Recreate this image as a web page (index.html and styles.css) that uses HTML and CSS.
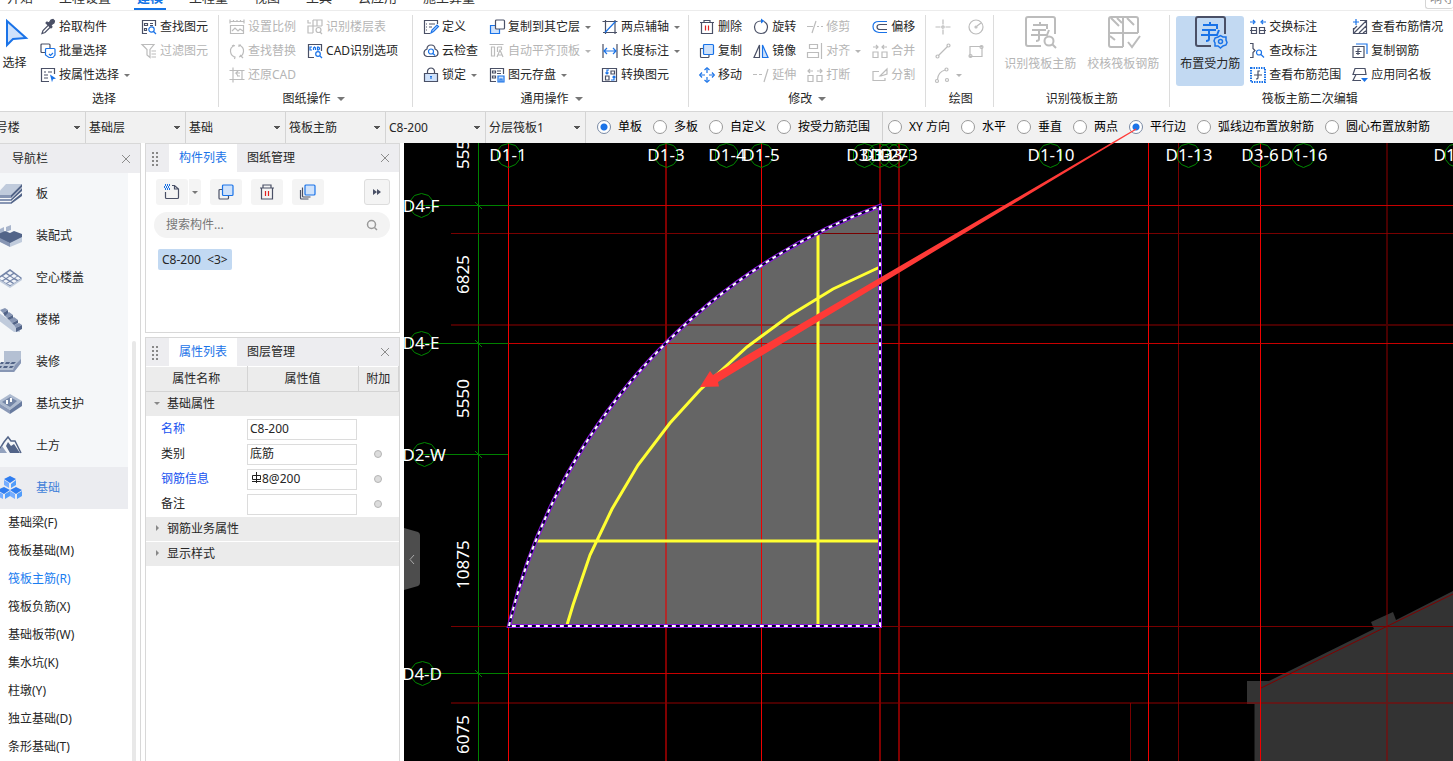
FILE: index.html
```html
<!DOCTYPE html>
<html lang="zh-CN">
<head>
<meta charset="utf-8">
<title>建模 - 筏板主筋</title>
<link rel="stylesheet" href="styles.css">
</head>
<body>
<header class="menubar">
  <nav class="menu">
    <a href="#">开始</a><a href="#">工程设置</a><a href="#" class="current">建模</a><a href="#">工程量</a><a href="#">视图</a><a href="#">工具</a><a href="#">云应用</a><a href="#">施工算量</a>
  </nav>
  <div class="menu-search">响导</div>
</header>

<section class="ribbon">
  <div class="group">
    <div class="tools">
      <button class="pick"><svg class="i" width="24" height="30" viewBox="0 0 24 30"><path class="b l" stroke-width="2" d="M4 3v24l6-6 13-1z"/></svg>选择</button>
      <div class="col">
        <button class="tool"><svg class="i" viewBox="0 0 16 16"><path d="M2 14.500l1-3 6-6 2 2-6 6z"/><path class="d" d="M7 3l2 1 2-3 2-.5 1.500 1.500-.5 2-3 2 1 2-1 1L6 4z"/></svg>拾取构件</button>
        <button class="tool"><svg class="i" viewBox="0 0 16 16"><path d="M5 9.500H2q-1 0-1-1V2q0-1 1-1h7q1 0 1 1v3"/><path class="b" d="M6 5.500h8q1 0 1 1V12l-2 2.500H9L5.500 12V6.500z"/><path class="b" d="M9 11l1.500 1.500L13 10"/></svg>批量选择</button>
        <button class="tool"><svg class="i" viewBox="0 0 16 16"><path d="M9 14.500H1.500V1.500h13V7M4 5h2M8 5h4M4 8h4M4 11h4"/><path class="bf" d="M10 7.500l6 4-3 .7-1 3z"/></svg>按属性选择<i class="caret"></i></button>
      </div>
      <div class="col">
        <button class="tool"><svg class="i" viewBox="0 0 16 16"><path d="M6 14.500H1.500V1.500h13V7M3.500 4.500h3v2h-3zM3.500 9.500h2v2h-2zM9 4.500h3M9 6.500h3"/><circle class="b" cx="10.500" cy="10.500" r="2.700"/><path class="b" d="M12.500 12.500L15 15"/></svg>查找图元</button>
        <button class="tool" disabled><svg class="i" viewBox="0 0 16 16"><path d="M1 1.500h12L9 6.500v8L6 12V6.500zM10.500 8H15M10.500 11H15M10.500 14H15"/></svg>过滤图元</button>
      </div>
    </div>
    <div class="caption">选择</div>
  </div>

  <div class="group sheets">
    <div class="tools">
      <div class="col">
        <button class="tool" disabled><svg class="i" viewBox="0 0 16 16"><path d="M1 2.500h14M1 .5v4M15 .5v4M4.500 1v2M8 1v2M11.500 1v2M1.500 6.500h13v8h-13zM3 12l3-3 3 3 2-2 3 2"/></svg>设置比例</button>
        <button class="tool" disabled><svg class="i" viewBox="0 0 16 16"><path d="M6 2.500Q1 4 1.500 8.500T6 14M4 13.500l2 .5-.5 2M10 2q5 2 4.500 6.500T10 14M10 4V2h2M3 3l2-1"/><path d="M11 12l3 3"/></svg>查找替换</button>
        <button class="tool" disabled><svg class="i" viewBox="0 0 16 16"><path d="M4 .5v15M.5 3.500h15M.5 12.500h15M13 3v10M11 6H7l2-2M7 6l2 3M8 9h3"/></svg>还原CAD</button>
      </div>
      <div class="col">
        <button class="tool" disabled><svg class="i" viewBox="0 0 16 16"><path d="M1 1v3h3M6 1v6H1v7h5M6 1h9v6M10 1v6M6 7h9M6 7v7"/><circle cx="11.500" cy="11" r="2.500"/><path d="M13 13l2 2"/></svg>识别楼层表</button>
        <button class="tool"><svg class="i" viewBox="0 0 16 16"><path d="M7 14.500H1.500v-13h13V8"/><path class="b" d="M5 4H3v3h2M6.500 7V5l1-1 1 1v2M10.500 4v3h1l1-1V5l-1-1z"/><circle class="b" cx="11" cy="11" r="2.300"/><path class="b" d="M13 13l2 2"/></svg>CAD识别选项</button>
      </div>
    </div>
    <div class="caption">图纸操作<i class="caret big"></i></div>
  </div>

  <div class="group common">
    <div class="tools">
      <div class="col">
        <button class="tool"><svg class="i" viewBox="0 0 16 16"><path d="M7 14.500H1.500V1.500h13V5M3 5h1M6 5h6M3 8h1M6 8h3M3 11h1"/><path class="b l" d="M8 14l1-3 5-5 1.500 1.500-5 5z"/></svg>定义</button>
        <button class="tool"><svg class="i" viewBox="0 0 16 16"><path d="M4 13.500Q1 13 1 10t3-4q0-4 4-4t4 4q3 1 3 4t-3 3.500z"/><circle class="b" cx="8" cy="8.500" r="2.500"/><path class="b" d="M10 10.500l2 2"/></svg>云检查</button>
        <button class="tool"><svg class="i" viewBox="0 0 16 16"><path d="M4.500 6V4Q5 1 8 1t3.500 3v2"/><path class="l" d="M1.500 6.500h13v8h-13z"/><path class="b" d="M8 9v3M7 9.500h2"/></svg>锁定<i class="caret"></i></button>
      </div>
      <div class="col">
        <button class="tool"><svg class="i" viewBox="0 0 16 16"><path class="b l" d="M1.500 6.500h9v8h-9z"/><rect class="w" x="6.500" y="1" width="9" height="9" rx="1"/></svg>复制到其它层<i class="caret"></i></button>
        <button class="tool" disabled><svg class="i" viewBox="0 0 16 16"><path d="M.5 1.500h14M2.500 4h3v9h-3zM8.500 4h4v3M8.500 4v5M8 14l3-7 3 7M9 12h4"/></svg>自动平齐顶板<i class="caret"></i></button>
        <button class="tool"><svg class="i" viewBox="0 0 16 16"><path d="M7 14.500H1.500v-13h13V7M3.500 4h3v2h-3zM3.500 9h3v2h-3zM8 4h4M8 6.500h4"/><path class="b l" d="M9 9h6v6H9zM11 15v-3h2v3"/></svg>图元存盘<i class="caret"></i></button>
      </div>
      <div class="col">
        <button class="tool"><svg class="i" viewBox="0 0 16 16"><path d="M3.500 1v14M.5 2.500h15M1 13.500h14M13 1v14"/><path class="b" d="M3 13.500L13.500 2.500"/></svg>两点辅轴<i class="caret"></i></button>
        <button class="tool"><svg class="i" viewBox="0 0 16 16"><path d="M1 1v14M15 1v14"/><path class="b" d="M2 8h12M5 5L2 8l3 3M11 5l3 3-3 3"/></svg>长度标注<i class="caret"></i></button>
        <button class="tool"><svg class="i" viewBox="0 0 16 16"><path d="M.5 1.500h14v13H.5zM9 4h3.500v3H9zM3.500 9H7v4H3.500z"/><path class="b" d="M7 3H5v4M3.500 5.500L5 7l1.500-1.500M9 13h3V9M10.500 10.500L12 9l1.500 1.500"/></svg>转换图元</button>
      </div>
    </div>
    <div class="caption">通用操作<i class="caret big"></i></div>
  </div>

  <div class="group">
    <div class="tools">
      <div class="col">
        <button class="tool"><svg class="i" viewBox="0 0 16 16"><path d="M1 3.500h14M5 3.500v-2h6v2M2.500 3.500v11h11v-11"/><path class="r" d="M6.500 6.500v5M9.500 6.500v5"/></svg>删除</button>
        <button class="tool"><svg class="i" viewBox="0 0 16 16"><path d="M4.500 5.500h-3v8q0 1 1 1H9q1 0 1-1v-2"/><rect class="b l" x="4.500" y="1.500" width="10" height="10" rx="1"/></svg>复制</button>
        <button class="tool"><svg class="i" viewBox="0 0 16 16"><path class="b" d="M8 2v4M8 10v4M2 8h4M10 8h4"/><path class="b" d="M5.500 3L8 .7 10.500 3M5.500 13L8 15.300 10.500 13M3 5.500L.7 8 3 10.500M13 5.500L15.300 8 13 10.500"/></svg>移动</button>
      </div>
      <div class="col">
        <button class="tool"><svg class="i" viewBox="0 0 16 16"><path d="M8 2Q2 2 1.500 8 2 14.500 8 14.500T14.500 8Q14.500 4.500 11 2.500"/><path class="bf" d="M8 -.5L11.500 2 8 4.500z"/></svg>旋转</button>
        <button class="tool"><svg class="i" viewBox="0 0 16 16"><path d="M6.500 2v12.500H1z"/><path class="b l" d="M9.500 2v12.500H15z"/></svg>镜像</button>
        <button class="tool" disabled><svg class="i" viewBox="0 0 16 16"><path d="M0 7.500h4M6 7.500h3M15 2l-4 13"/></svg>延伸</button>
      </div>
      <div class="col">
        <button class="tool" disabled><svg class="i" viewBox="0 0 16 16"><path d="M0 7.500h6M9 2L5 14M10 7.500h2M14 7.500h2"/></svg>修剪</button>
        <button class="tool" disabled><svg class="i" viewBox="0 0 16 16"><path d="M2.500 1.500h8v4h-8zM.5 9.500h11v5H.5zM14.500 0v16"/></svg>对齐<i class="caret"></i></button>
        <button class="tool" disabled><svg class="i" viewBox="0 0 16 16"><path d="M1 8.500h5v6H1zM10 8.500h5v6h-5zM1 4h5M3 2L1 4l2 2M10 4h5M13 2l2 2-2 2"/></svg>打断</button>
      </div>
      <div class="col">
        <button class="tool"><svg class="i" viewBox="0 0 16 16"><path class="b" d="M15 2.500H7q-6 0-6 5t6 6h8"/><path d="M15 5.500H8q-3 0-3 2.500t3 2.500h7"/></svg>偏移</button>
        <button class="tool" disabled><svg class="i" viewBox="0 0 16 16"><path d="M1 9h5v5.500H1zM10 9h5v5.500h-5zM1 4h5M4 2l2 2-2 2M15 4h-5M12 2l-2 2 2 2"/></svg>合并</button>
        <button class="tool" disabled><svg class="i" viewBox="0 0 16 16"><path d="M7 4.500H1v9h12V11M8 9l7-7v5L9 9z"/></svg>分割</button>
      </div>
    </div>
    <div class="caption">修改<i class="caret big"></i></div>
  </div>

  <div class="group draw">
    <div class="tools">
      <div class="col">
        <button class="tool" disabled aria-label="点"><svg class="i" viewBox="0 0 16 16"><path d="M8 .5v5M8 10.500v5M.5 8h5M10.500 8h5"/><circle cx="8" cy="8" r="1.200"/></svg></button>
        <button class="tool" disabled aria-label="直线"><svg class="i" viewBox="0 0 16 16"><circle cx="2.500" cy="13.500" r="1.500"/><circle cx="13.500" cy="2.500" r="1.500"/><path d="M3.500 12.500l9-9"/></svg></button>
        <button class="tool" disabled aria-label="弧线"><svg class="i" viewBox="0 0 16 16"><circle cx="2" cy="14" r="1.500"/><circle cx="12" cy="13" r="1.500"/><circle cx="11.500" cy="2.500" r="1.500"/><path d="M2.500 12.500Q3 5 10 3"/></svg><i class="caret"></i></button>
      </div>
      <div class="col">
        <button class="tool" disabled aria-label="圆"><svg class="i" viewBox="0 0 16 16"><circle cx="8" cy="8" r="7"/><circle cx="8" cy="8" r="1"/><path d="M9 7l4-3"/></svg></button>
        <button class="tool" disabled aria-label="矩形"><svg class="i" viewBox="0 0 16 16"><path d="M2 3.500h12v10H2z"/><circle cx="2.500" cy="13" r="1.500"/><circle cx="13.500" cy="4" r="1.500"/></svg></button>
      </div>
    </div>
    <div class="caption">绘图</div>
  </div>

  <div class="group">
    <div class="tools">
      <button class="large" disabled><svg class="i" width="32" height="32" viewBox="0 0 32 32"><path stroke-width="2" d="M17 30H4q-2 0-2-2V3q0-2 2-2h25q2 0 2 2v15"/><path stroke-width="2" d="M9 9h7M16 6v3h7v4M8 14h14M15 14v9q0 2-3 2M7 19h16l2-5"/><circle stroke-width="2" cx="25" cy="25" r="4.500"/><path stroke-width="2" d="M28 28l4 4"/></svg>识别筏板主筋</button>
      <button class="large" disabled><svg class="i" width="32" height="32" viewBox="0 0 32 32"><path stroke-width="2" d="M16 31H4q-2 0-2-2V3q0-2 2-2h25q2 0 2 2v14M16 1v30M2 17h29M4 2l8 8M10 2l5 5M20 2l7 7M3 20l5 4M21 26l4 5 8-11"/></svg>校核筏板钢筋</button>
    </div>
    <div class="caption">识别筏板主筋</div>
  </div>

  <div class="group edit">
    <div class="tools">
      <button class="large active"><svg class="i" width="32" height="32" viewBox="0 0 32 32"><path stroke-width="2" d="M17 30H4q-2 0-2-2V3q0-2 2-2h25q2 0 2 2v15"/><path class="b" stroke-width="2" d="M9 9h7M16 6v3h7v4M8 14h14M15 14v9q0 2-3 2M7 19h16l2-5"/><path class="b" stroke-width="1.500" d="M24 21l2.500-1.500L29 21h3v3l1 2.500-1 2.500-3 1-2.500 2L24 30h-3v-3l-1-2 1-3z"/><circle class="b" stroke-width="1.500" cx="26.500" cy="25.500" r="2"/></svg>布置受力筋</button>
      <div class="col">
        <button class="tool"><svg class="i" viewBox="0 0 16 16"><path class="b" d="M0 3h4M3 1l2 2-2 2M16 3h-4M13 1l-2 2 2 2"/><path d="M1.500 8.500h5v6h-5zM9.500 8.500h5v6h-5zM0 11.500h6.500M9.500 11.500H16"/></svg>交换标注</button>
        <button class="tool"><svg class="i" viewBox="0 0 16 16"><path d="M0 .5h3v5l2 2-2 2v5H0"/><circle class="b" cx="9" cy="9.500" r="2.500"/><path class="b" d="M11 11.500l3 3"/></svg>查改标注</button>
        <button class="tool"><svg class="i" viewBox="0 0 16 16"><rect class="b" stroke-width="2" stroke-dasharray="1.500 1" x="1" y="1" width="14" height="14"/><path d="M10 4H8v7q0 1-2 1M4 8h8"/></svg>查看布筋范围</button>
      </div>
      <div class="col">
        <button class="tool"><svg class="i" viewBox="0 0 16 16"><path d="M8 1.500h6.500v13h-13V9M2 14L14 2M1 11l4-4M7 14l7-7M11 14l4-3"/><path class="b" d="M1 3h6M4 0v6"/></svg>查看布筋情况</button>
        <button class="tool"><svg class="i" viewBox="0 0 16 16"><path d="M1 3.500h11v11H1zM8 6H6v6M3.500 8.500h6M4 10.500h4"/><path class="b" d="M4 1h11v10"/></svg>复制钢筋</button>
        <button class="tool"><svg class="i" viewBox="0 0 16 16"><path d="M3 1.500h10l1 6-13 0zM4 7.500L1 13.500h8"/><path class="bf" d="M9 11h7l-3.500 4z"/></svg>应用同名板</button>
      </div>
    </div>
    <div class="caption">筏板主筋二次编辑</div>
  </div>
</section>

<form class="options">
  <select class="first" aria-label="楼栋"><option>1号楼</option></select>
  <select aria-label="楼层"><option>基础层</option></select>
  <select aria-label="构件类型"><option>基础</option></select>
  <select aria-label="构件"><option>筏板主筋</option></select>
  <select aria-label="名称"><option>C8-200</option></select>
  <select aria-label="分层"><option>分层筏板1</option></select>
  <fieldset class="ranges">
    <label><input type="radio" name="range" checked>单板</label>
    <label><input type="radio" name="range">多板</label>
    <label><input type="radio" name="range">自定义</label>
    <label><input type="radio" name="range">按受力筋范围</label>
  </fieldset>
  <fieldset class="modes">
    <label><input type="radio" name="mode">XY 方向</label>
    <label><input type="radio" name="mode">水平</label>
    <label><input type="radio" name="mode">垂直</label>
    <label><input type="radio" name="mode">两点</label>
    <label><input type="radio" name="mode" checked>平行边</label>
    <label><input type="radio" name="mode">弧线边布置放射筋</label>
    <label><input type="radio" name="mode">圆心布置放射筋</label>
  </fieldset>
</form>

<main class="workspace">
  <aside class="nav">
    <div class="nav-head"><span>导航栏</span><button class="close" aria-label="关闭"><svg width="10" height="10" viewBox="0 0 10 10"><path d="M1 1l8 8M9 1L1 9"/></svg></button></div>
    <div class="nav-body">
      <div class="nav-list">
        <button class="cat"><svg viewBox="0 0 24 24"><path fill="#c0cbdc" d="M8 2h16l-11 11H-2z"/><path fill="#8796b4" d="M-2 13h15v3H-2zM-2 17h15v2H-2zM-2 20h15v2H-2z"/><path fill="#526488" d="M13 13L24 2v3L13 16zM13 17L24 6v3L13 19zM13 20l11-9v3l-11 8z"/></svg>板</button>
        <button class="cat"><svg viewBox="0 0 24 24"><path fill="#a8b5cc" d="M2 5l4-2v5l-4 2zM8 3l5-2v5L8 8z"/><path fill="#526488" d="M0 10l7-3 5 2 4-2 8 3v7l-10 3L0 15z"/><path fill="#8796b4" d="M-2 12l14 7v4l-14-7z"/><path fill="#c0cbdc" d="M12 19l12-6v5l-12 5z"/></svg>装配式</button>
        <button class="cat"><svg viewBox="0 0 24 24"><path fill="#c0cbdc" d="M-1 12v2l13 8 12-8v-2z"/><path fill="#7384a8" d="M-1 12L12 3l12 9-12 8z"/><path fill="#f2f5fa" d="M12 5l3 2-3 2-3-2zM8 8l3 2-3 2-3-2zM16 8l3 2-3 2-3-2zM4 10.500l3 2-3 2-3-2zM12 10.500l3 2-3 2-3-2zM20 10.500l2.500 2-2.500 1.500-3-2zM8 13.500l3 2-3 1.500-3-2zM16 13.500l3 1.500-3 2-3-2zM12 16l3 2-3 1-3-1.500z"/></svg>空心楼盖</button>
        <button class="cat"><svg viewBox="0 0 24 24"><path fill="#c0cbdc" d="M0 4l22 16v4l-6 0L0 12z"/><path fill="#8796b4" d="M2 2l5-2 3 2-5 3zM6 7l5-3 4 3-6 3zM11 12l5-3 4 3-6 3zM16 17l5-2 3 2-6 3z"/><path fill="#526488" d="M5 5l5-3v3L7 8zM9 10l6-3v3l-4 2zM14 15l6-3v3l-4 2zM18 20l6-3v4l-6 3z"/></svg>楼梯</button>
        <button class="cat"><svg viewBox="0 0 24 24"><path fill="#b4c0d3" d="M6 1l17 0v12l-7 9H-2l3-9h5z"/><path fill="#526488" d="M3 12h3l-1 2H2zM8 12h4l-1 2H7zM14 12h4l-2 2h-4zM1 16h3l-1 2H0zM6 16h4l-1 2H5zM12 16h4l-2 2h-3z"/><path fill="#8796b4" d="M17 15l6-6v4l-7 9H-2v-2h17z"/></svg>装修</button>
        <button class="cat"><svg viewBox="0 0 24 24"><path fill="#aebbd0" d="M-1 10L12 2l12 7-12 9z"/><path fill="#7385a6" d="M4 10l8-5 7 4-7 6z"/><path fill="#fff" d="M8 8h2v4H8zM12 6h2v4h-2z"/><path fill="#8a99b7" d="M-1 10l13 8v4L-1 14z"/><path fill="#687b9f" d="M12 18l12-9v5l-12 8z"/></svg>基坑支护</button>
        <button class="cat"><svg viewBox="0 0 24 24"><path fill="none" stroke="#526488" stroke-width="1.500" d="M-1 19L6 8l4-5 3 4 4 0 6 12"/><path fill="#526488" d="M10 8l3 4 3-2 6 9H12L8 12z"/><path fill="#93a2be" d="M4 12l5 7H0z"/></svg>土方</button>
        <button class="cat on"><svg viewBox="0 0 24 24"><path fill="#2f7df0" d="M12 0l6 3-6 4-6-4zM6 11l6 3-6 4-7-4zM18 11l6 3-6 4-6-4z"/><path fill="#75adff" d="M6 4l5 3v5l-5-3zM-1 15l6 3v5l-6-3zM12 15l5 3v5l-5-3z"/><path fill="#529dfb" d="M18 4v5l-5 3V8zM12 15v5l-5 3v-5zM24 15v5l-5 3v-5z"/></svg>基础</button>
        <div class="subs">
          <button>基础梁(F)</button><button>筏板基础(M)</button><button class="on">筏板主筋(R)</button><button>筏板负筋(X)</button><button>基础板带(W)</button><button>集水坑(K)</button><button>柱墩(Y)</button><button>独立基础(D)</button><button>条形基础(T)</button>
        </div>
      </div>
      <div class="track"><div class="thumb"></div></div>
    </div>
  </aside>

  <div class="docks">
    <section class="dock list">
      <div class="dock-head"><i class="grip"></i><button class="tab on">构件列表</button><button class="tab">图纸管理</button><button class="close" aria-label="关闭"><svg width="10" height="10" viewBox="0 0 10 10"><path d="M1 1l8 8M9 1L1 9"/></svg></button></div>
      <div class="bar">
        <span class="split"><button class="sq" aria-label="新建"><svg class="i" viewBox="0 0 16 16"><path d="M1.500 8v5.500q0 1 1 1h11q1 0 1-1V5l-4-3.500H8M10.500 1.500V5h4"/><path class="b" stroke-width="2" stroke-dasharray="1 1" d="M1 1h5M0 3h5M1 5h5"/></svg></button><button class="more" aria-label="更多"><i class="caret"></i></button></span>
        <button class="sq" aria-label="复制"><svg class="i" viewBox="0 0 16 16"><path d="M4.500 5.500H2q-1 0-1 1V14q0 1 1 1h7.500q1 0 1-1v-2.500"/><rect class="b l" x="4.500" y="1" width="10.500" height="10.500" rx="1"/></svg></button>
        <button class="sq" aria-label="删除"><svg class="i" viewBox="0 0 16 16"><path d="M1 4h14M4 4V1h8v3M2.500 4v11h11V4"/><path class="r" d="M6.500 7v5M9.500 7v5"/></svg></button>
        <button class="sq" aria-label="层间复制"><svg class="i" viewBox="0 0 16 16"><path d="M.5 6v8q0 1 1 1h7M2.500 3.500v8.500q0 1 1 1h7"/><rect class="b l" x="5" y="1" width="10" height="10" rx="1"/></svg></button>
        <button class="sq expand" aria-label="展开"><svg width="10" height="8" viewBox="0 0 10 8"><path fill="#4a5066" d="M1 1l4 3-4 3zM5 1l4 3-4 3z"/></svg></button>
      </div>
      <label class="search"><input type="text" placeholder="搜索构件..." aria-label="搜索构件"><svg width="12" height="12" viewBox="0 0 12 12"><circle cx="5.500" cy="5.500" r="4"/><path d="M8.500 8.500L11 11"/></svg></label>
      <button class="chip">C8-200&nbsp; &lt;3&gt;</button>
    </section>

    <section class="dock props">
      <div class="dock-head"><i class="grip"></i><button class="tab on">属性列表</button><button class="tab">图层管理</button><button class="close" aria-label="关闭"><svg width="10" height="10" viewBox="0 0 10 10"><path d="M1 1l8 8M9 1L1 9"/></svg></button></div>
      <table>
        <colgroup><col class="c1"><col class="c2"><col class="c3"></colgroup>
        <thead><tr><th>属性名称</th><th>属性值</th><th>附加</th></tr></thead>
        <tbody>
          <tr class="section"><td colspan="3"><i class="tri down"></i>基础属性</td></tr>
          <tr><td class="key"><label for="p1">名称</label></td><td><span class="field"><input id="p1" value="C8-200"></span></td><td></td></tr>
          <tr><td><label for="p2">类别</label></td><td><span class="field"><input id="p2" value="底筋"></span></td><td><i class="dot"></i></td></tr>
          <tr><td class="key"><label for="p3">钢筋信息</label></td><td><span class="field"><svg width="12" height="16" viewBox="0 0 12 16"><path fill="none" stroke="#222" d="M6.500 1v11M2.500 4.500h8v4h-8zM2 10.500h9"/></svg><input id="p3" value="8@200"></span></td><td><i class="dot"></i></td></tr>
          <tr><td><label for="p4">备注</label></td><td><span class="field"><input id="p4" value=""></span></td><td><i class="dot"></i></td></tr>
          <tr class="section"><td colspan="3"><i class="tri"></i>钢筋业务属性</td></tr>
          <tr class="section"><td colspan="3"><i class="tri"></i>显示样式</td></tr>
        </tbody>
      </table>
    </section>
  </div>

  <section class="canvas">
    <svg class="plan"><g transform="translate(-404 -143)">
      <path fill="#333" d="M1247 681h22l105-52-3-7 22-10 3 8 57-29 400-198v600h-598.500V704H1247z"/>
      <path fill="#656565" d="M509 626A590 590 0 0 1 880 206V626z"/>
      <g class="grid">
        <path stroke="#008000" d="M478.500 143v4000M418 205.500h90M418 343.500h90M418 454.500h90M418 673.500h90"/>
        <path stroke="#008000" d="M475 202l7 7M475 340l7 7M475 451l7 7M475 670l7 7"/>
        <path stroke="#780000" d="M451 233.500h3000M451 626.500h3000M1130.500 703v3000M1178.500 143v4000"/>
        <path stroke="#900000" stroke-opacity=".5" stroke-width="2" d="M451 325h3000M451 703h3000M1387 143v4000"/>
        <path stroke="#800000" stroke-width="2" d="M666 143v4000M880 143v4000M899 143v4000"/>
        <path stroke="#f00000" d="M508.500 143v4000M761.500 143v4000M1148.500 143v4000M1260.500 143v4000"/>
        <path stroke="#c80000" d="M508 205.500h3000M508 343.500h3000M508 673.500h3000"/>
        <path stroke="#800000" d="M1261 688l192-94 400-196"/>
      </g>
      <path fill="none" stroke="#b02a2a" stroke-width="2" d="M666 344v281"/>
      <path fill="none" stroke="#ffff32" stroke-width="3" d="M567 625l6-20 17-50 22-46 26-44 32-42 30-33 47-43 42-31 44-27 47-22M818 235v390M537 541h342"/>
      <g fill="none">
        <path stroke="#8c14e0" stroke-width="4" d="M509 626A590 590 0 0 1 880 206V626z"/>
        <path stroke="#000028" stroke-width="2" d="M509 626A590 590 0 0 1 880 206V626z"/>
        <path stroke="#fff" stroke-width="2" stroke-dasharray="4 4" d="M509 626A590 590 0 0 1 880 206V626z"/>
      </g>
      <g class="bubbles">
        <path id="b" d="M508.500 143.500l7 2 4 5v9l-4 5-7 3-7-3-4-5v-9l4-5z"/>
        <use href="#b" x="158"/><use href="#b" x="218"/><use href="#b" x="253"/><use href="#b" x="356"/><use href="#b" x="371"/><use href="#b" x="381"/><use href="#b" x="390"/><use href="#b" x="542"/><use href="#b" x="680"/><use href="#b" x="752"/><use href="#b" x="795"/><use href="#b" x="948"/>
        <use href="#b" x="-87" y="50"/><use href="#b" x="-87" y="188"/><use href="#b" x="-84" y="299"/><use href="#b" x="-86" y="518"/>
      </g>
      <g class="marks">
        <text x="508" y="161">D1-1</text><text x="666" y="161">D1-3</text><text x="727" y="161">D1-4</text><text x="761" y="161">D1-5</text><text x="865" y="161">D3-1</text><text x="880" y="161">D3-2</text><text x="889" y="161">D3-7</text><text x="899" y="161">D3-3</text><text x="1051" y="161">D1-10</text><text x="1189" y="161">D1-13</text><text x="1260" y="161">D3-6</text><text x="1304" y="161">D1-16</text><text x="1457" y="161">D1-17</text>
        <text x="421" y="212">D4-F</text><text x="421" y="349">D4-E</text><text x="424" y="461">D2-W</text><text x="422" y="680">D4-D</text>
      </g>
      <g class="dims">
        <text transform="translate(469 169) rotate(-90)">5550</text><text transform="translate(469 294) rotate(-90)">6825</text><text transform="translate(469 418) rotate(-90)">5550</text><text transform="translate(469 589) rotate(-90)">10875</text><text transform="translate(469 754) rotate(-90)">6075</text>
      </g>
      <path fill="#4d4d4d" d="M404 528l14 4q2 1 2 3v48q0 2-2 3l-14 4z"/>
      <path fill="none" stroke="#aaa" d="M414 555l-4 4.500 4 4.500"/>
    </g></svg>
    <svg class="pointer"><g transform="translate(-404 -143)"><path fill="#ff3a37" d="M700 387l10-16 3 4L1136 128.500l.5 1L718 382l1 4.500z"/></g></svg>
  </section>
</main>
</body>
</html>
```
FILE: styles.css
```css
* { box-sizing: border-box; }
html, body { height: 100%; margin: 0; }
body {
  display: flex;
  flex-direction: column;
  overflow: hidden;
  background: #fff;
  color: #262626;
  font: 12px/16px "Noto Sans", "Noto Sans CJK SC", sans-serif;
}
button, input, select { font: inherit; color: inherit; }
button { display: flex; align-items: center; padding: 0; border: 0; background: none; white-space: nowrap; }
fieldset { margin: 0; padding: 0; border: 0; }

/* menu */
.menubar {
  display: flex;
  flex: none;
  align-items: flex-end;
  justify-content: space-between;
  height: 11px;
  overflow: hidden;
  border-bottom: 1px solid #ececec;
}
.menu { display: flex; gap: 20px; padding-left: 4px; font-size: 13px; line-height: 20px; }
.menu a { padding: 0 3px 1px; color: #333; text-decoration: none; border-bottom: 2px solid transparent; }
.menu a.current { color: #1473e6; font-weight: 700; border-color: #1473e6; }
.menu-search { width: 28px; padding-left: 4px; border: 1px solid #d5d5d5; border-right: 0; border-radius: 3px; color: #888; white-space: nowrap; overflow: hidden; margin-bottom: 1px; line-height: 18px; }

/* ribbon */
.ribbon { display: flex; flex: none; padding: 4px 0 0; border-bottom: 1px solid #d6d6d6; overflow: hidden; }
.group { position: relative; flex: none; padding: 0 11px 0 10px; }
.group:not(:last-child)::after { content: ""; position: absolute; right: 0; top: 0; bottom: 4px; border-right: 1px solid #dcdcdc; }
.group:first-child { padding-left: 0; }
.group.sheets { padding-right: 15px; }
.group.common { padding-right: 9px; }
.group.draw { padding: 0 8px 0 9px; }
.group.edit { padding-left: 6px; }
.tools { display: flex; gap: 11px; min-height: 72px; }
.col { display: flex; flex-direction: column; }
.tool { height: 24px; gap: 3px; }
.draw .col { width: 18px; }
.draw .tools { gap: 15px; }
.tool .caret { margin-left: 2px; }
.i { flex: none; width: 16px; height: 16px; fill: none; stroke: #4a5066; stroke-width: 1.200; overflow: visible; }
.pick .i { width: 24px; height: 30px; }
.large .i { width: 32px; height: 32px; }
.i .b { stroke: #1a73e8; }
.i .bf { fill: #1a73e8; stroke: none; }
.i .l { fill: #cfe2fb; }
.i .w { fill: #fff; }
.i .d { fill: #4a5066; }
.i .r { stroke: #e02020; }
button:disabled { color: #b5b5b5; }
button:disabled .i { stroke: #bcbcbc; }
.caret { border: 3px solid transparent; border-top: 3px solid #777; border-bottom: 0; }
button:disabled .caret { border-top-color: #b5b5b5; }
.caret.big { border-width: 4px 4px 0; margin-left: 6px; }
.pick, .large { flex-direction: column; }
.pick { width: 29px; height: 72px; padding-top: 3px; gap: 7px; }
.large { height: 70px; margin-top: 1px; gap: 8px; }
.large.active { padding: 0 4px; margin-right: -5px; background: #c2d9f2; border-radius: 3px; }
.caption { display: flex; align-items: center; justify-content: center; height: 24px; }

/* options */
.options { display: flex; flex: none; height: 31px; background: #f1f1f1; }
.options select {
  flex: none;
  width: 100px;
  padding: 0 3px;
  border: 0;
  border-right: 1px solid #d4d4d4;
  appearance: none;
  background: linear-gradient(to top right, transparent 50%, #555 50%) no-repeat right 8px center / 3px 4px, linear-gradient(to top left, transparent 50%, #555 50%) no-repeat right 5px center / 3px 4px;
}
.options .first { margin-left: -14px; }
.ranges, .modes { display: flex; align-items: center; gap: 11px; padding: 0 12px 0 11px; color: #000; height: 29px; }
.modes { padding-left: 5px; border-left: 1px solid #d0d0d0; }
.options label { display: flex; align-items: center; gap: 7px; white-space: nowrap; }
.options input { appearance: none; width: 14px; height: 14px; margin: 0; border: 1px solid #999; border-radius: 50%; background: #fff; }
.options input:checked { border-color: #7a8ba5; background: radial-gradient(circle, #1a73e8 3px, #fff 4px); }

/* workspace */
.workspace { display: flex; flex: 1; min-height: 0; }
.nav { display: flex; flex: none; flex-direction: column; width: 141px; border-top: 1px solid #d8d8d8; border-right: 1px solid #d8d8d8; }
.nav-head { display: flex; flex: none; align-items: center; justify-content: space-between; height: 29px; padding: 0 9px 0 12px; background: #ededf0; }
.close svg { fill: none; stroke: #8c8c8c; display: block; }
.nav-body { display: flex; flex: 1; min-height: 0; }
.nav-list { flex: 1; overflow: hidden; background: #f5f7f9; }
.cat { width: 100%; height: 42px; gap: 14px; }
.cat svg { flex: none; width: 24px; height: 24px; margin-left: -2px; }
.cat.on { background: #ebecf0; color: #3f7fd9; }
.subs { background: #fff; }
.subs button { width: 100%; height: 28px; padding-left: 8px; }
.subs .on { color: #1a7df0; }
.track { width: 12px; padding: 168px 4px 0; display: flex; }
.thumb { flex: 1; border-radius: 2px 2px 0 0; background: #e8e8e8; }

.docks { display: flex; flex: none; flex-direction: column; width: 263px; padding: 0 4px; gap: 4px; }
.dock { border: 1px solid #d8d8d8; }
.dock.list { height: 190px; }
.dock.props { flex: 1; border-bottom: 0; }
.dock-head { display: flex; align-items: stretch; height: 28px; padding-right: 9px; background: #ededf0; }
.dock-head .close { margin-left: auto; }
.grip { width: 23px; background: radial-gradient(circle, #888 1px, transparent 1px) 5px 7px / 4px 4px; background-clip: content-box; padding: 7px 10px 6px 5px; }
.tab { padding: 0 10px; }
.tab.on { background: #fff; color: #1a73e8; }
.bar { display: flex; gap: 9px; padding: 7px 9px 7px 10px; }
.split { display: flex; gap: 1px; }
.sq { justify-content: center; width: 32px; height: 26px; border-radius: 3px; background: #f4f4f4; }
.more { justify-content: center; width: 12px; border-radius: 0 3px 3px 0; background: #f4f4f4; }
.expand { width: 26px; margin-left: auto; border: 1px solid #ddd; }
.search { display: flex; align-items: center; height: 26px; margin: 0 9px 0 8px; padding: 0 12px; border-radius: 13px; background: #f3f3f3; }
.search input { flex: 1; min-width: 0; padding: 0; border: 0; outline: 0; background: none; }
.search input::placeholder { color: #777; opacity: 1; }
.search svg { fill: none; stroke: #999; stroke-width: 1.500; }
.chip { height: 21px; margin: 11px 0 0 12px; padding: 0 4px; border-radius: 2px; background: #c2d9f2; }

table { width: 100%; table-layout: fixed; border-collapse: collapse; border-top: 1px solid #fff; }
.c1 { width: 101px; }
.c2 { width: 111px; }
th { height: 25px; padding: 0; background: #ececec; border-right: 1px solid #d4d4d4; border-bottom: 1px solid #d4d4d4; font-weight: 400; }
td { height: 25px; padding: 0 0 0 15px; }
td + td { padding: 0; text-align: center; }
.key { color: #1652f0; }
.section td { padding: 0; border-bottom: 1px solid #fff; background: #ebebeb; }
.tri { display: inline-block; margin: 0 8px 3px 10px; border: 3px solid transparent; border-left: 3px solid #888; border-right: 0; vertical-align: middle; }
.tri.down { margin: 0 7px 3px 8px; border: 3px solid transparent; border-top: 3px solid #888; border-bottom: 0; }
.field { display: flex; align-items: center; height: 21px; margin-right: 1px; padding: 0 2px; border: 1px solid #dcdcdc; background: #fff; }
.field input { flex: 1; min-width: 0; padding: 0; border: 0; outline: 0; background: none; }
.field svg { flex: none; }
.dot { display: block; width: 8px; height: 8px; margin: 0 auto; border: 1px solid #b5b5b5; border-radius: 50%; background: #dcdcdc; }

/* drawing canvas */
.canvas { position: relative; flex: 1; min-width: 0; background: #000; }
.plan, .pointer { position: absolute; left: 0; top: 0; width: 100%; height: 100%; }
.plan { overflow: hidden; }
.pointer { overflow: visible; pointer-events: none; }
.grid { fill: none; }
.bubbles { fill: none; stroke: #008a00; }
.marks, .dims { fill: #fff; font-size: 17px; }
.marks { text-anchor: middle; }
```
